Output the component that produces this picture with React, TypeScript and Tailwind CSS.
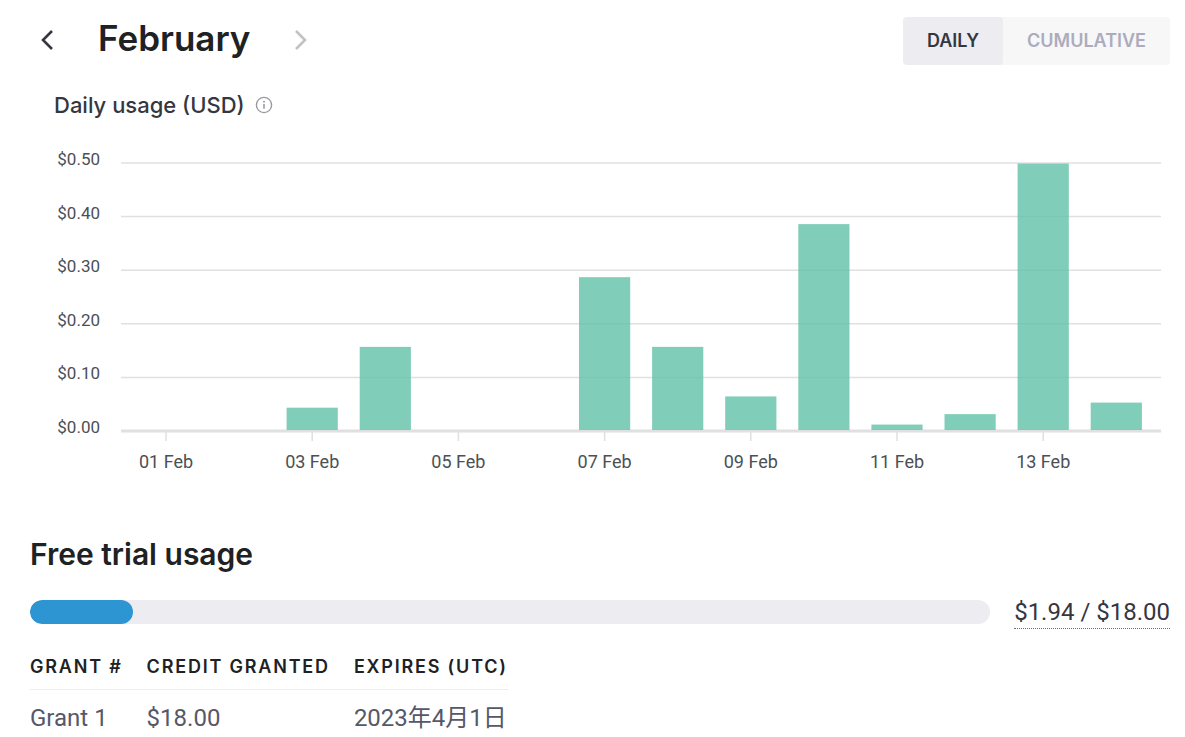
import { useState } from "react";

const CHART_LEFT = 91;
const CHART_RIGHT = 1131;
const CHART_TOP = 23;
const CHART_BASE = 291;
const DAY_STEP = 73.1;
const FIRST_DAY = 136;
const MAX_VALUE = 0.5;

const dailyUsage = [
  0, 0, 0.0435, 0.157, 0, 0, 0.287, 0.157, 0.0645, 0.386, 0.012, 0.0315, 0.499, 0.053,
];

const toY = (value: number) =>
  CHART_BASE - (value / MAX_VALUE) * (CHART_BASE - CHART_TOP);

function Chevron({ direction }: { direction: "left" | "right" }) {
  return (
    <svg width="14" height="22" viewBox="0 0 14 22" fill="none" aria-hidden="true">
      <path
        d={direction === "left" ? "M12 2 3 11l9 9" : "M2 2l9 9-9 9"}
        stroke="currentColor"
        strokeWidth="2.6"
      />
    </svg>
  );
}

function InfoIcon() {
  return (
    <svg width="18" height="18" viewBox="0 0 18 18" fill="none" aria-hidden="true">
      <circle cx="9" cy="9" r="7.6" stroke="#9a9aa6" strokeWidth="1.4" />
      <path d="M9 8v4.8" stroke="#9a9aa6" strokeWidth="1.6" />
      <circle cx="9" cy="5.7" r="1" fill="#9a9aa6" />
    </svg>
  );
}

function UsageChart({ values }: { values: number[] }) {
  return (
    <svg viewBox="0 0 1140 340" className="block w-full" role="img" aria-label="Daily usage (USD)">
      {[0.5, 0.4, 0.3, 0.2, 0.1, 0].map((tick) => (
        <g key={tick}>
          <text x="70" y={toY(tick) + 2} textAnchor="end" fontSize="17" fill="#4b5055">
            {`$${tick.toFixed(2)}`}
          </text>
          <line
            x1={CHART_LEFT}
            x2={CHART_RIGHT}
            y1={toY(tick)}
            y2={toY(tick)}
            stroke="#e0e0e0"
            strokeWidth={tick === 0 ? 3 : 1.5}
          />
        </g>
      ))}
      {values.map((value, index) => {
        const center = FIRST_DAY + index * DAY_STEP;
        return (
          <g key={index}>
            {value > 0 && (
              <rect
                x={center - 25.6}
                y={toY(value)}
                width="51.2"
                height={CHART_BASE - 1 - toY(value)}
                fill="#60c2a8"
                fillOpacity="0.8"
              />
            )}
            {index % 2 === 0 && (
              <>
                <line
                  x1={center}
                  x2={center}
                  y1={CHART_BASE + 1}
                  y2={CHART_BASE + 10}
                  stroke="#e0e0e0"
                  strokeWidth="1.5"
                />
                <text
                  x={center}
                  y={CHART_BASE + 37}
                  textAnchor="middle"
                  fontSize="18"
                  fill="#4b5055"
                >
                  {`${String(index + 1).padStart(2, "0")} Feb`}
                </text>
              </>
            )}
          </g>
        );
      })}
    </svg>
  );
}

export default function App() {
  const [cumulative, setCumulative] = useState(false);
  let total = 0;
  const running = dailyUsage.map((value) => (total += value));
  const values = cumulative
    ? running.map((value) => (value / total) * MAX_VALUE)
    : dailyUsage;
  const active = "bg-[#ececf1] text-[#353740]";
  const inactive = "text-[#acacbe]";

  return (
    <main className="bg-white pr-[15px] pl-[30px] font-['Roboto','Noto_Sans_CJK_SC',sans-serif] text-[#202123]">
      <header className="flex items-start justify-between pt-4">
        <div className="flex items-center pl-2.5">
          <button type="button" aria-label="Previous month" className="pt-1 text-[#353740]">
            <Chevron direction="left" />
          </button>
          <h1 className="mr-11 ml-11 font-['Inter',sans-serif] text-[35px] leading-[44px] font-semibold">
            February
          </h1>
          <button type="button" aria-label="Next month" disabled className="pt-1 text-[#c2c2c2]">
            <Chevron direction="right" />
          </button>
        </div>
        <div className="mt-px flex h-12 overflow-hidden rounded bg-[#f7f7f8] font-['Inter',sans-serif] text-[18px]">
          <button
            type="button"
            aria-pressed={!cumulative}
            onClick={() => setCumulative(false)}
            className={`rounded px-6 pb-0.5 font-semibold ${cumulative ? inactive : active}`}
          >
            DAILY
          </button>
          <button
            type="button"
            aria-pressed={cumulative}
            onClick={() => setCumulative(true)}
            className={`rounded px-6 pb-0.5 font-semibold ${cumulative ? active : inactive}`}
          >
            CUMULATIVE
          </button>
        </div>
      </header>

      <section>
        <div className="flex items-center gap-2.5 pt-6 pl-6">
          <h2 className="font-['Inter',sans-serif] text-[22px] leading-8 font-medium text-[#353740]">
            Daily usage (USD)
          </h2>
          <InfoIcon />
        </div>
        <div className="pt-[19px]">
          <UsageChart values={values} />
        </div>
      </section>

      <section className="pt-[54px]">
        <h2 className="font-['Inter',sans-serif] text-[30px] leading-10 font-semibold">
          Free trial usage
        </h2>
        <div className="flex items-center gap-6 pt-5">
          <div className="h-6 flex-1 overflow-hidden rounded-full bg-[#ececf1]">
            <div className="h-full rounded-full bg-[#2e95d3]" style={{ width: `${(1.94 / 18) * 100}%` }} />
          </div>
          <span className="border-b border-dotted border-[#6e6e80] pt-0.5 text-[24px] leading-8 text-[#353740]">
            $1.94 / $18.00
          </span>
        </div>
        <table className="mt-[26px] text-left">
          <thead>
            <tr className="border-b border-[#ececf1] font-['Inter',sans-serif] text-[18px] leading-6 tracking-widest">
              <th className="pr-6 pb-2.5 font-semibold">GRANT #</th>
              <th className="pr-6 pb-2.5 font-semibold">CREDIT GRANTED</th>
              <th className="pb-2.5 font-semibold">EXPIRES (UTC)</th>
            </tr>
          </thead>
          <tbody>
            <tr className="text-[24px] leading-8 text-[#565869]">
              <td className="pt-3">Grant 1</td>
              <td className="pt-3">$18.00</td>
              <td className="pt-3">2023年4月1日</td>
            </tr>
          </tbody>
        </table>
      </section>
    </main>
  );
}
